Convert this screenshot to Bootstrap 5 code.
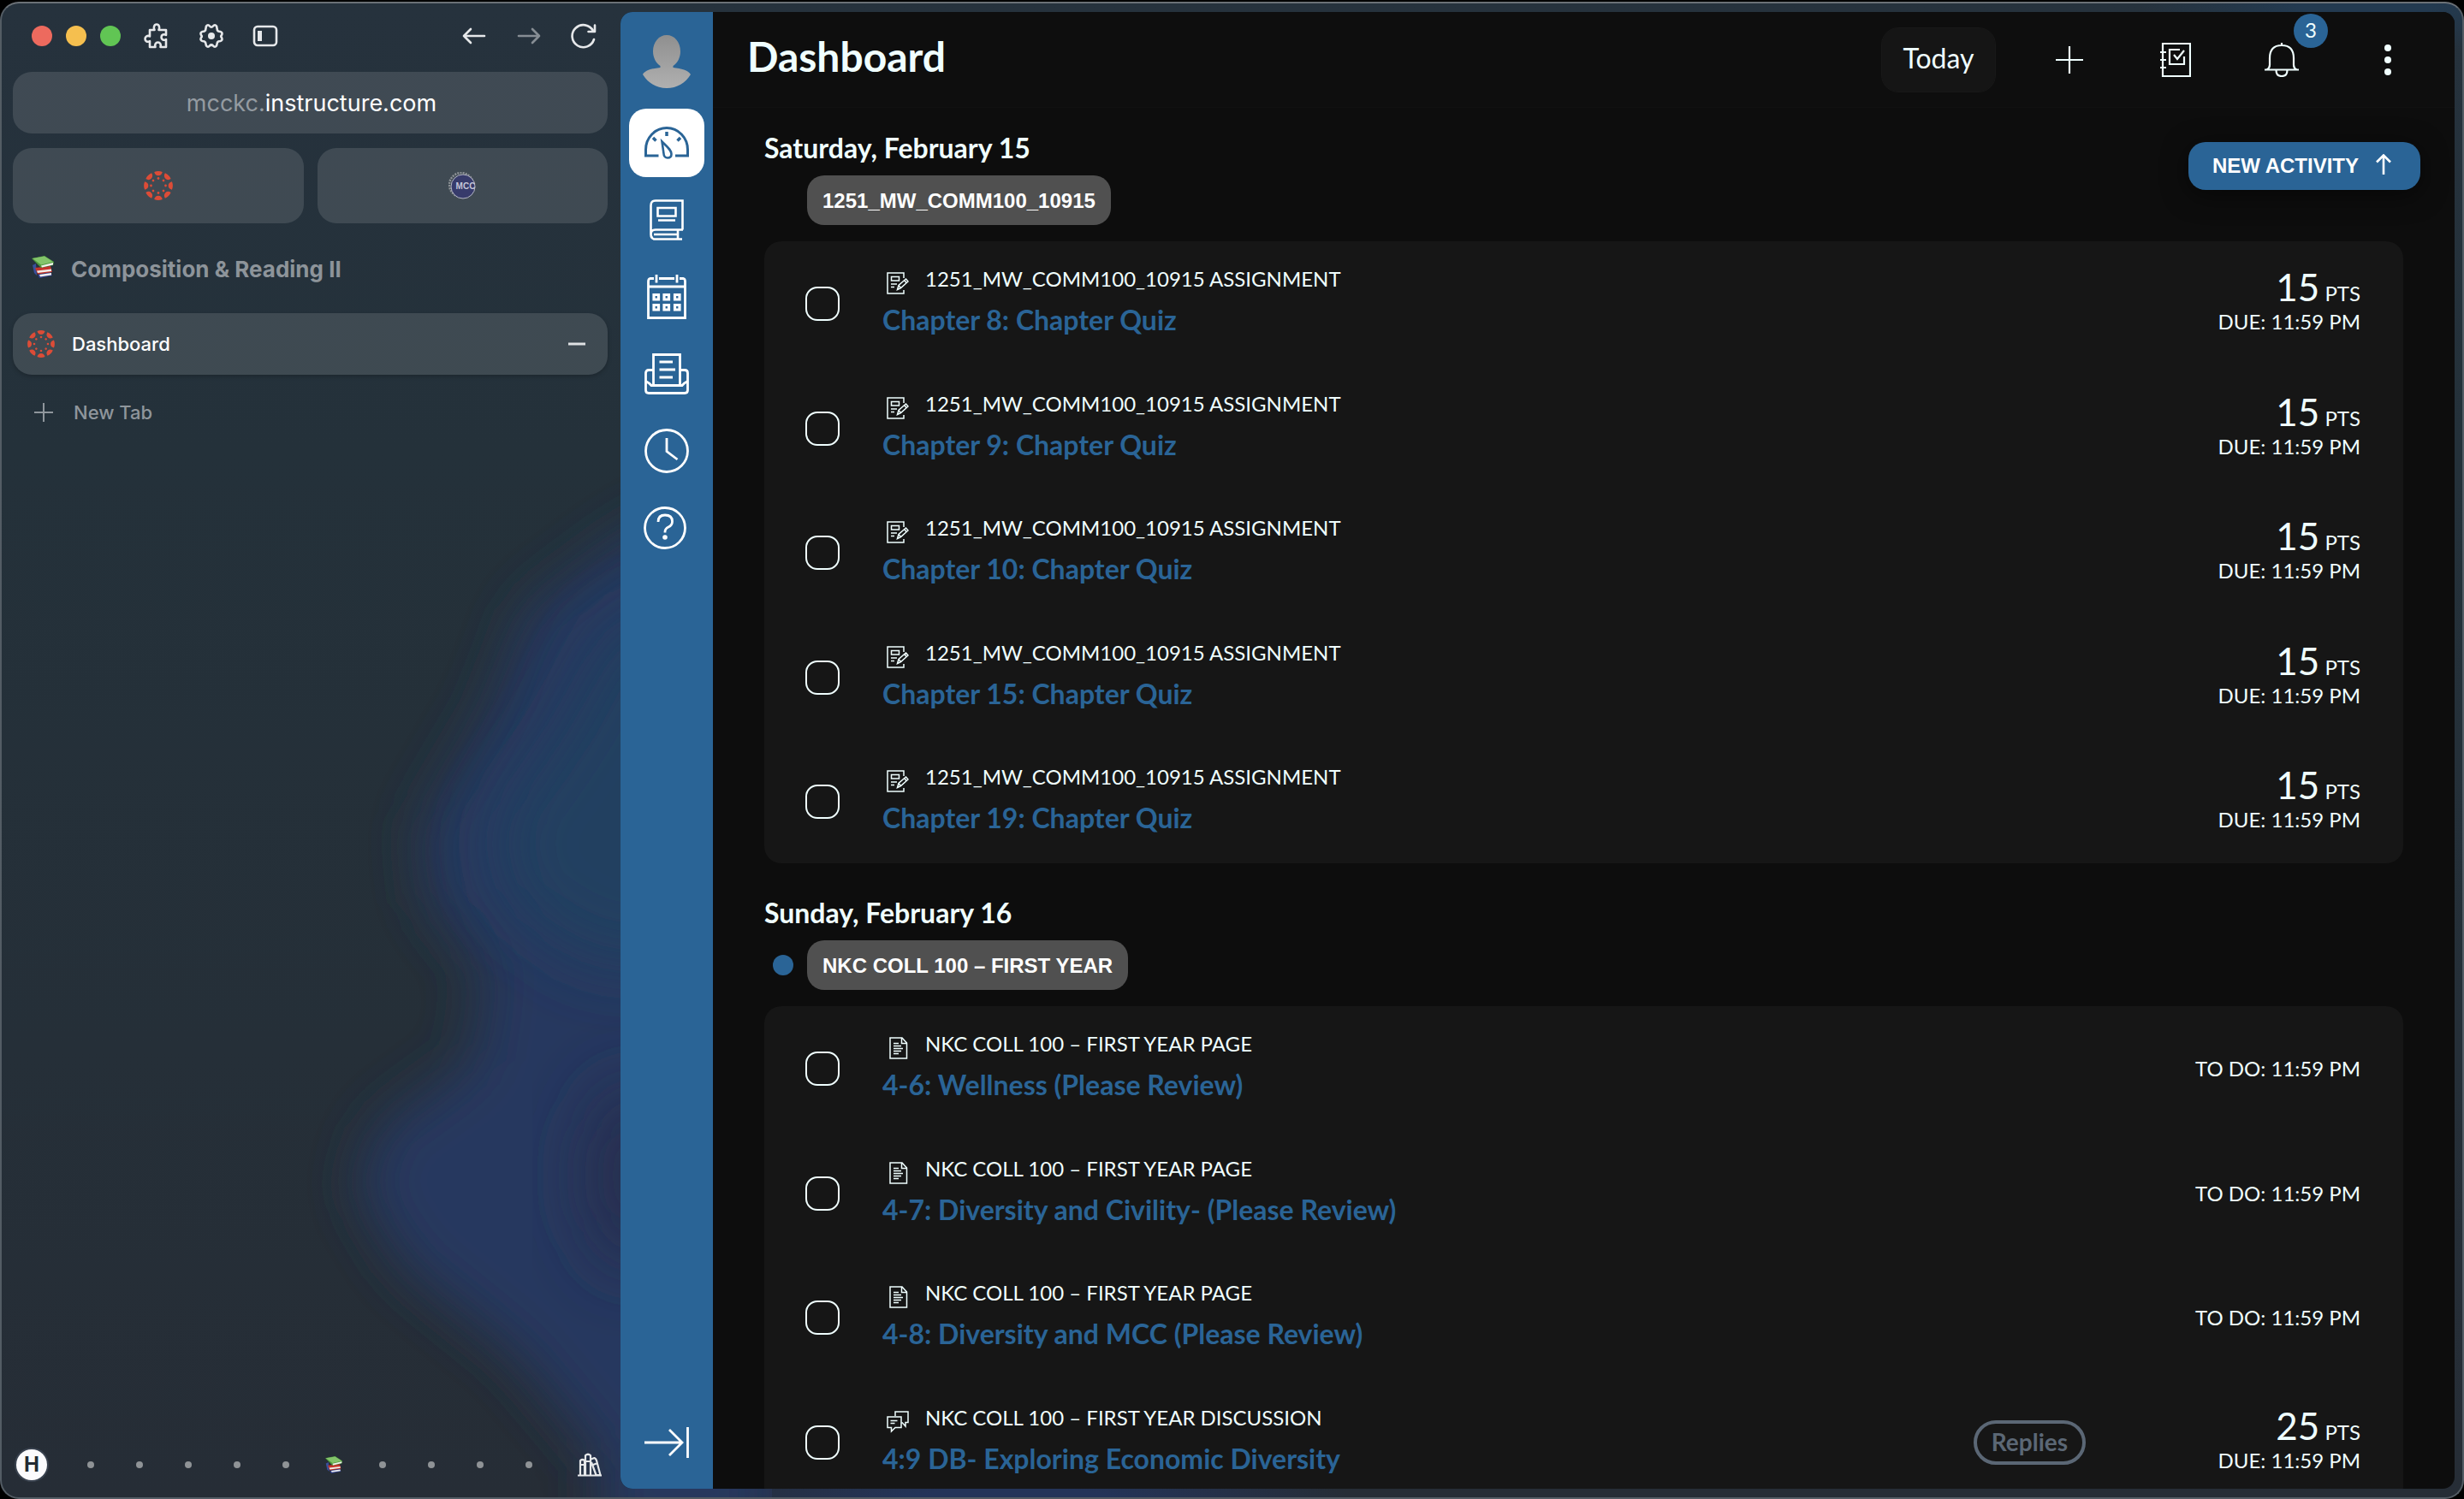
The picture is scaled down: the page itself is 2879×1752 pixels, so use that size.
<!DOCTYPE html>
<html lang="en">
<head>
<meta charset="utf-8">
<meta name="viewport" content="width=device-width, initial-scale=1">
<title>Dashboard</title>
<link href="https://cdn.jsdelivr.net/npm/bootstrap@5.3.0/dist/css/bootstrap.min.css" rel="stylesheet">
<script src="https://cdn.jsdelivr.net/npm/bootstrap@5.3.0/dist/js/bootstrap.bundle.min.js" defer></script>
<style>
  :root { --brand: #2a6496; --ink: #f0ffff; --glass: rgba(255,255,255,.12); --ui: Inter, "Liberation Sans", sans-serif; --lato: Lato, "Liberation Sans", sans-serif; }
  html, body { height: 100%; }
  body { background: #000; overflow: hidden; padding-top: 2px; }
  svg { display: block; flex: none; }
  button { font-family: inherit; }
  .plain-btn { background: none; border: 0; padding: 0; color: inherit; }

  /* browser window */
  .browser {
    border: 2px solid #535c64; border-top-color: #6b7177; border-radius: 22px; padding: 10px 9px 10px 0;
    position: relative; overflow: hidden;
    background-color: #25303a;
    background-image:
      radial-gradient(400px 60px at 1180px 1752px, #243459 30%, transparent 100%),
      radial-gradient(260px 60px at 2760px 0, #233a50 30%, transparent 100%),
      linear-gradient(180deg, #26323d 0%, #24313a 30%, #252f38 70%, #262d36 100%);
  }
  .glow { position: absolute; left: 0; top: 0; }
  .browser-side { flex: 0 0 723px; padding: 0 15px 0 13px; font-family: var(--ui); color: #e6e8ea; position: relative; }
  .window-bar { height: 56px; padding: 0 12px 0 22px; }
  .light { width: 24px; height: 24px; border-radius: 50%; }
  .ext-tools { margin-left: 26px; }
  .address { height: 72px; margin-top: 14px; border: 0; border-radius: 22px; background: var(--glass); font-size: 27px; color: #fff; padding: 3px 0 0 3px; }
  .address span { color: #949ba1; }
  .pins { margin-top: 17px; }
  .pinned { height: 88px; border: 0; border-radius: 22px; background: var(--glass); }
  .space-title { font-size: 26px; font-weight: 700; color: #8d949a; height: 72px; margin-top: 17px; padding-left: 22px; }
  .tab-item { height: 72px; border-radius: 22px; padding-left: 17px; font-size: 22px; color: #fff; }
  .tab-item.current { background: var(--glass); box-shadow: 0 2px 5px rgba(0,0,0,.22); margin-top: 16px; padding-right: 26px; font-weight: 500; }
  .tab-item.fresh { color: #8f969c; margin-top: 8px; padding-left: 25px; font-weight: 500; }
  .space-bar { height: 56px; padding: 0 6px 0 4px; }
  .space-dots { margin: 0 36px 0 31px; }
  .space-slot { width: 40px; display: flex; align-items: center; justify-content: center; }
  .space-slot i { width: 8px; height: 8px; border-radius: 50%; background: #8f9396; }
  .space-h { width: 36px; height: 36px; border-radius: 50%; background: #fbfbfd; color: #222b33; font-weight: 700; font-size: 24px; line-height: 36px; box-shadow: 0 0 0 2px #39424f; }

  /* page */
  .page { border-radius: 14px; overflow: hidden; background: #0d0d0d; font-family: var(--lato); color: var(--ink); min-width: 0; position: relative; }
  .rail { flex: 0 0 108px; background: var(--brand); color: #fff; padding: 23px 0 14px; gap: 10px; }
  .rail a { width: 88px; height: 80px; border-radius: 20px; color: #fff; display: flex; align-items: center; justify-content: center; }
  .rail a.active { background: #fff; color: var(--brand); }
  .rail .avatar-link { height: 70px; border-radius: 0; margin-bottom: 10px; }
  .top-bar { height: 112px; padding: 0 58px 0 40px; border-bottom: 1px solid #111; background: #0e0e0e; }
  .top-bar h1 { font-size: 48px; line-height: 56px; font-weight: 700; margin-bottom: 8px; }
  .today { height: 76px; width: 134px; border-radius: 20px; background: #151515; border: 1px solid #181818; color: var(--ink); font-size: 32px; margin-right: 66px; padding: 0 0 4px; }
  .tool { width: 40px; height: 40px; display: flex; align-items: center; justify-content: center; position: relative; }
  .tools { gap: 84px; }
  .count { position: absolute; left: 34px; top: -34px; width: 40px; height: 40px; border-radius: 50%; background: var(--brand); font-size: 24px; line-height: 38px; color: var(--ink); text-align: center; }
  .planner { padding: 0 60px; position: relative; }
  .new-activity { position: absolute; right: 40px; top: 40px; height: 56px; padding: 0 34px 0 28px; gap: 20px; border: 0; border-radius: 20px; background: var(--brand); color: #fff; font: 700 24px "Liberation Sans", Arial, sans-serif; box-shadow: 0 6px 30px rgba(0,0,0,.5); }
  .day { font-size: 32px; line-height: 40px; font-weight: 700; margin: 0 0 12px; padding-top: 27px; }
  .group + .group .day { padding-top: 38px; }
  .flag-slot { width: 50px; padding-left: 10px; }
  .flag-slot i { display: block; width: 24px; height: 24px; border-radius: 50%; background: var(--brand); }
  .course { height: 58px; padding: 0 18px; border-radius: 20px; background: #505050; color: #fff; font: 700 24px/60px "Liberation Sans", Arial, sans-serif; text-decoration: none; }
  .sheet { background: #161616; border-radius: 20px; margin: 19px 0 0; padding: 0; list-style: none; }
  .sheet li { min-height: 145px; padding: 0 50px 0 48px; display: flex; align-items: center; }
  .sheet li:nth-child(even) { min-height: 146px; border-top: 1px solid #161616; }
  .done { appearance: none; width: 40px; height: 40px; border: 2px solid var(--ink); border-radius: 14px; margin: 0 50px 0 0; flex: none; }
  .done:checked { background: var(--brand); }
  .what { padding-bottom: 5px; }
  .kind { font-size: 24px; line-height: 32px; gap: 19px; padding-left: 5px; margin-bottom: 10px; }
  .kind svg { margin-top: 8px; }
  .what a { font-size: 32px; line-height: 40px; font-weight: 700; color: var(--brand); text-decoration: none; display: block; }
  .when { font-size: 24px; line-height: 32px; text-align: right; }
  .when.scored { padding-bottom: 4px; }
  .pts { line-height: 24px; margin-bottom: 3px; }
  .pts b { font-size: 44px; line-height: 44px; font-weight: 400; }
  .replies { height: 52px; border: 4px solid #5b6775; border-radius: 26px; color: #5b6775; font-size: 28px; line-height: 42px; font-weight: 700; padding: 0 17px; }
  .when-col { width: 321px; }
</style>
</head>
<body>
<svg width="0" height="0" class="position-absolute" aria-hidden="true">
  <defs>
    <symbol id="i-canvas" viewBox="0 0 32 32">
      <g fill="#dc4c37">
        <g id="seg"><path d="M11.500 1Q16 -.8 20.500 1Q19.500 5 16 5Q12.500 5 11.500 1z"/><circle cx="16" cy="8" r="1.300"/></g>
        <use href="#seg" transform="rotate(45 16 16)"/><use href="#seg" transform="rotate(90 16 16)"/><use href="#seg" transform="rotate(135 16 16)"/><use href="#seg" transform="rotate(180 16 16)"/><use href="#seg" transform="rotate(225 16 16)"/><use href="#seg" transform="rotate(270 16 16)"/><use href="#seg" transform="rotate(315 16 16)"/>
      </g>
    </symbol>
    <symbol id="i-books" viewBox="0 0 26 26">
      <path d="M1 11l4-2 1 14-3-3z" fill="#3a4f9c"/>
      <path d="M7 22l15-3 2 4-15 3z" fill="#2f3f8f"/><path d="M9 22l14-2v2.500l-13 2z" fill="#eee"/>
      <path d="M4 14l18-2 2 7-17 2.500z" fill="#c5342b"/><path d="M6 17.500l17-2v2.500l-16 2z" fill="#f1ece6"/>
      <path d="M0 3L15 0l11 7-1 4-14 3z" fill="#4f9a3e"/><path d="M1 3l14-2.500 10 6.500-14 3.500z" fill="#83c46a"/><path d="M11 11.500l14-3.500v2.500l-13 3z" fill="#f3f3ee"/>
    </symbol>
    <symbol id="i-assign" viewBox="0 0 26 26">
      <g fill="none" stroke="currentColor" stroke-width="1.500"><path d="M20 7V1H1v24h19v-4"/><path d="M5.500 5.500h9v4.500h-9zM5 14h7M5 17.500h4"/><path d="M12.500 20.500l1.500-5 8.500-7.500 2.500 3-8.500 7.500zM14 15.500l2.500 3M20.500 9.500l2.500 3"/></g>
    </symbol>
    <symbol id="i-page" viewBox="0 0 26 26">
      <g fill="none" stroke="currentColor" stroke-width="1.500"><path d="M4 1h14l5.500 6v18H4zM17.500 1v6.500h6"/><path d="M8 7.500h6M8 10.500h9M8 13.500h11M8 16.500h9M8 19.500h6"/></g>
    </symbol>
    <symbol id="i-talk" viewBox="0 0 26 26">
      <g fill="none" stroke="currentColor" stroke-width="1.500"><path d="M10 6V1h15v12.500h-3V18l-4-4.500M1 7h16v12.500h-7L5.500 24v-4.500H1z"/><path d="M4.500 11.500h8M4.500 14.500h5"/></g>
    </symbol>
  </defs>
</svg>

<div class="browser d-flex h-100">
  <!-- wallpaper glow showing through the translucent sidebar -->
  <svg class="glow" width="900" height="1748" viewBox="0 0 900 1748" aria-hidden="true">
    <defs>
      <filter id="soft" x="-30%" y="-30%" width="160%" height="160%"><feGaussianBlur stdDeviation="32"/></filter>
      <filter id="softer" x="-50%" y="-50%" width="200%" height="200%"><feGaussianBlur stdDeviation="40"/></filter>
    </defs>
    <path filter="url(#soft)" fill="#25385f" d="M900 540L730 625 615 710 575 820 490 965 500 1050 565 1130 550 1235 440 1315 415 1385 470 1475 600 1580 700 1700 700 1800H900z"/>
    <path filter="url(#softer)" fill="#234160" d="M900 690L720 720 650 850 570 960 590 1050 690 1120H900z"/>
    <ellipse filter="url(#softer)" cx="740" cy="1370" rx="60" ry="110" fill="#262f50"/>
  </svg>
  <aside class="browser-side d-flex flex-column">
    <div class="window-bar d-flex align-items-center">
      <div class="d-flex gap-3"><span class="light" style="background:#ed6a5e"></span><span class="light" style="background:#f5bf4f"></span><span class="light" style="background:#61c554"></span></div>
      <div class="ext-tools d-flex align-items-center gap-4">
        <button class="plain-btn pe-2" aria-label="Extensions"><svg width="32" height="32" viewBox="0 0 32 32" fill="none" stroke="currentColor" stroke-width="2.600" stroke-linejoin="round"><path d="M8 9h5.500c-1.500-2.500-.5-6.500 2.500-6.500s4 4 2.500 6.500H27v6c-2.500-1.500-5.500-.5-5.500 2.500s3 4 5.500 2.500V29h-6.500c1-3-.5-5.500-3-5.500s-4 2.500-3 5.500H8v-7c-2.500 1.500-5.500.5-5.500-2.500S5.500 15 8 16.500z"/></svg></button>
        <button class="plain-btn pe-2" aria-label="Settings"><svg width="32" height="32" viewBox="0 0 32 32" fill="none" stroke="currentColor" stroke-width="2.600" stroke-linejoin="round"><path d="M10 4.500q2-2.500 4 0q2 2.500 4 0q2-2.500 4 0l1 5q1 1.500 3.500 1.500q3 1 1.500 4q-1.500 1.500 0 3q1.500 3-1.500 4q-2.500 0-3.500 1.500l-1 4q-2 2.500-4 0q-2-2-4 0q-2 2.500-4 0l-1-4q-1-1.500-3.500-1.500q-3-1-1.500-4q1.500-1.500 0-3q-1.500-3 1.500-4q2.500 0 3.500-1.500z"/><circle cx="16" cy="16" r="4" fill="currentColor" stroke="none"/></svg></button>
        <button class="plain-btn" aria-label="Toggle sidebar"><svg width="30" height="30" viewBox="0 0 30 30" fill="none" stroke="currentColor" stroke-width="2.600"><rect x="2" y="4" width="26" height="22" rx="4"/><path d="M8.500 9v12" stroke-width="5"/></svg></button>
      </div>
      <div class="d-flex ms-auto align-items-center gap-4">
        <button class="plain-btn pe-2" aria-label="Back"><svg width="32" height="32" viewBox="0 0 32 32" fill="none" stroke="currentColor" stroke-width="2.600" stroke-linecap="round" stroke-linejoin="round"><path d="M28 16H4M12 8l-8 8 8 8"/></svg></button>
        <button class="plain-btn pe-2 opacity-50" aria-label="Forward"><svg width="32" height="32" viewBox="0 0 32 32" fill="none" stroke="currentColor" stroke-width="2.600" stroke-linecap="round" stroke-linejoin="round"><path d="M4 16h24M20 8l8 8-8 8"/></svg></button>
        <button class="plain-btn" aria-label="Reload"><svg width="32" height="32" viewBox="0 0 32 32" fill="none" stroke="currentColor" stroke-width="2.600" stroke-linecap="round" stroke-linejoin="round"><path d="M28 20a13 13 0 1 1-1-10M29 3.500V11h-7.500"/></svg></button>
      </div>
    </div>
    <button class="address w-100"><span>mcckc.</span>instructure.com</button>
    <div class="pins row g-0">
      <div class="col pe-2"><button class="pinned w-100 d-flex align-items-center justify-content-center" aria-label="Canvas"><svg width="34" height="34"><use href="#i-canvas"/></svg></button></div>
      <div class="col ps-2"><button class="pinned w-100 d-flex align-items-center justify-content-center" aria-label="MCC">
        <svg width="32" height="32" viewBox="0 0 32 32"><circle cx="15" cy="15" r="14" fill="none" stroke="#8d9296" stroke-width="2.500" stroke-dasharray="2 1.200"/><circle cx="17" cy="17" r="14" fill="#373b6b" stroke="#b4b6c4" stroke-width="1"/><text x="20" y="20" text-anchor="middle" font-family="Liberation Sans, sans-serif" font-weight="700" font-size="10" fill="#c4c5d8">MCC</text></svg></button></div>
    </div>
    <div class="space-title d-flex align-items-center"><svg class="me-3 mb-1" width="26" height="26"><use href="#i-books"/></svg><span class="ps-1">Composition &amp; Reading II</span></div>
    <div class="tab-item current d-flex align-items-center"><svg class="me-3" width="32" height="32"><use href="#i-canvas"/></svg><span class="ps-1">Dashboard</span>
      <button class="plain-btn ms-auto" aria-label="Close tab"><svg width="20" height="20" viewBox="0 0 20 20"><path d="M0 10h20" stroke="#dfe1e3" stroke-width="3"/></svg></button></div>
    <button class="plain-btn tab-item fresh d-flex align-items-center"><svg class="me-4" width="22" height="24" viewBox="0 0 22 24"><path d="M0 12h22M11 1v22" stroke="currentColor" stroke-width="2"/></svg><span>New Tab</span></button>
    <div class="space-bar d-flex align-items-center mt-auto">
      <button class="plain-btn space-h text-center" aria-label="Home space">H</button>
      <div class="space-dots d-flex align-items-center justify-content-between flex-fill">
        <span class="space-slot"><i></i></span><span class="space-slot"><i></i></span><span class="space-slot"><i></i></span><span class="space-slot"><i></i></span><span class="space-slot"><i></i></span>
        <span class="space-slot"><svg width="20" height="20"><use href="#i-books"/></svg></span>
        <span class="space-slot"><i></i></span><span class="space-slot"><i></i></span><span class="space-slot"><i></i></span><span class="space-slot"><i></i></span>
      </div>
      <button class="plain-btn" aria-label="Library"><svg width="30" height="28" viewBox="0 0 30 28" fill="none" stroke="currentColor" stroke-width="2.200" stroke-linejoin="round"><path d="M1 26.500h28M4 26V9q2.500-2 5 0v17M10 26V3q3-2.500 6 0v23M4 14h5M10 10h6M16.500 7.500l4-1.500q2 1 2.500 3l4.500 17h-5L17 11M19 14l4-1.500"/></svg></button>
    </div>
  </aside>

  <div class="page d-flex flex-fill">
    <nav class="rail d-flex flex-column align-items-center" aria-label="Global navigation">
      <a href="#" class="avatar-link" aria-label="Account"><svg width="56" height="66" viewBox="0 0 56 66"><defs><linearGradient id="g" x1="0" y1="0" x2="0" y2="1"><stop offset="0" stop-color="#8f8f8f"/><stop offset="1" stop-color="#b0b0b0"/></linearGradient></defs><path fill="url(#g)" d="M28 2c9 0 16 8 16 19 0 8-4 14-8.500 17v2C45 41 53 43 56 48 50 58 40 64 28 64S6 58 0 48c3-5 11-7 20.500-8v-2C16 35 12 29 12 21 12 10 19 2 28 2z"/></svg></a>
      <a href="#" class="active" aria-label="Dashboard"><svg width="52" height="38" viewBox="0 0 52 38" fill="none" stroke="currentColor" stroke-width="3"><path d="M16.500 34H1.500V27a24.500 25.500 0 0 1 49 0v7H36"/><path d="M26 6v5M10 13l3.500 3.500M42 13l-3.500 3.500" stroke-width="3.500"/><path d="M20.500 17.500c6 6 11 10 11 14.500 0 3-2 4.500-4.500 4.500s-4.500-2-4.500-5z" stroke-width="2.600"/></svg></a>
      <a href="#" aria-label="Courses"><svg width="40" height="48" viewBox="0 0 40 48" fill="none" stroke="currentColor" stroke-width="2.600"><path d="M38.500 35.500V1.500H7Q1.500 1.500 1.500 7v34M39 35.500H7Q1.500 35.500 1.500 41t5.500 5.500h31M33 36v10M33 41H5"/><path d="M9.500 10h21v9.500h-21zM10 24.500h20"/></svg></a>
      <a href="#" aria-label="Calendar"><svg width="46" height="52" viewBox="0 0 46 52" fill="none" stroke="currentColor" stroke-width="2.800"><path d="M8 4.500H3.500Q1.500 5 1.500 8v42.500h43V8q0-3-2-3.500H38M14 4.500h18M11 0v9.500M35 0v9.500M1.500 14h43"/><path d="M8 23.500h5.500V29H8zM20 23.500h5.500V29H20zM32.500 23.500H38V29h-5.500zM8 35.500h5.500V41H8zM20 35.500h5.500V41H20zM32.500 35.500H38V41h-5.500z" stroke-width="3.200"/></svg></a>
      <a href="#" aria-label="Inbox"><svg width="52" height="48" viewBox="0 0 52 48" fill="none" stroke="currentColor" stroke-width="2.800"><path d="M10.500 36V1.500h31V36M10 19.500H5Q1.500 19.500 1.500 23v20q0 3.500 3.500 3.500h42q3.500 0 3.500-3.500V23q0-3.500-3.500-3.500h-5M1.500 32.500q4 2 6.500 5h36q2.500-3 6.500-5"/><path d="M17.500 10H33M17.500 19H36M17.500 28H33"/></svg></a>
      <a href="#" aria-label="History"><svg width="52" height="52" viewBox="0 0 52 52" fill="none" stroke="currentColor" stroke-width="2.800"><circle cx="26" cy="26" r="24.500"/><path d="M26 11v15.500l12.500 9.500"/></svg></a>
      <a href="#" class="pe-1" aria-label="Help"><svg width="50" height="50" viewBox="0 0 50 50" fill="none" stroke="currentColor" stroke-width="2.800"><circle cx="25" cy="25" r="23.500"/><path d="M17 18q0-8 8-8 8.500 0 8.500 7.500 0 4.500-4.500 6.500-4 2-4 5.500v1"/><circle cx="25" cy="36" r="2.800" fill="currentColor" stroke="none"/></svg></a>
      <a href="#" class="mt-auto" aria-label="Expand navigation"><svg width="52" height="38" viewBox="0 0 52 38" fill="none" stroke="currentColor" stroke-width="2.800"><path d="M0 19h44M29 4l15 15-15 15M50.500 1v36"/></svg></a>
    </nav>

    <main class="flex-fill">
      <header class="top-bar d-flex align-items-center">
        <h1 class="me-auto">Dashboard</h1>
        <button class="today">Today</button>
        <div class="tools d-flex">
          <button class="plain-btn tool" aria-label="Add to do"><svg width="32" height="32" viewBox="0 0 32 32"><path d="M0 16h32M16 0v32" stroke="currentColor" stroke-width="2.200"/></svg></button>
          <button class="plain-btn tool" aria-label="My grades"><svg width="36" height="40" viewBox="0 0 36 40" fill="none" stroke="currentColor" stroke-width="2.200"><path d="M3 1h32v38H3z"/><path d="M0 11h7M0 20h7M0 29h7M28 16v9H11V8h12M16 14l4 5 8-10"/></svg></button>
          <button class="plain-btn tool" aria-label="3 notifications"><svg width="40" height="40" viewBox="0 0 40 40" fill="none" stroke="currentColor" stroke-width="2.200"><path d="M20 0v3M20 3q14 0 14 15v8q0 3.500 3.500 5.500h-35Q6 29.500 6 26v-8Q6 3 20 3zM0 31.500h40M13.500 32q0 7 6.500 7t6.500-7"/></svg><span class="count">3</span></button>
          <button class="plain-btn tool" aria-label="More"><svg width="10" height="38" viewBox="0 0 10 38" fill="currentColor"><circle cx="5" cy="5" r="4"/><circle cx="5" cy="19" r="4"/><circle cx="5" cy="33" r="4"/></svg></button>
        </div>
      </header>

      <div class="planner">
        <button class="new-activity d-flex align-items-center">NEW ACTIVITY<svg class="mb-1" width="18" height="24" viewBox="0 0 18 24" fill="none" stroke="currentColor" stroke-width="2.600"><path d="M9 24V2M1 9.500l8-8 8 8"/></svg></button>

        <section class="group">
          <h2 class="day">Saturday, February 15</h2>
          <div class="d-flex align-items-center"><span class="flag-slot"></span><a href="#" class="course">1251_MW_COMM100_10915</a></div>
          <ul class="sheet">
            <li><input type="checkbox" class="done" aria-labelledby="a1"><div class="what me-auto"><div class="kind d-flex"><svg width="26" height="26"><use href="#i-assign"/></svg>1251_MW_COMM100_10915 ASSIGNMENT</div><a href="#" id="a1">Chapter 8: Chapter Quiz</a></div><div class="when scored"><div class="pts"><b>15</b> PTS</div>DUE: 11:59 PM</div></li>
            <li><input type="checkbox" class="done" aria-labelledby="a2"><div class="what me-auto"><div class="kind d-flex"><svg width="26" height="26"><use href="#i-assign"/></svg>1251_MW_COMM100_10915 ASSIGNMENT</div><a href="#" id="a2">Chapter 9: Chapter Quiz</a></div><div class="when scored"><div class="pts"><b>15</b> PTS</div>DUE: 11:59 PM</div></li>
            <li><input type="checkbox" class="done" aria-labelledby="a3"><div class="what me-auto"><div class="kind d-flex"><svg width="26" height="26"><use href="#i-assign"/></svg>1251_MW_COMM100_10915 ASSIGNMENT</div><a href="#" id="a3">Chapter 10: Chapter Quiz</a></div><div class="when scored"><div class="pts"><b>15</b> PTS</div>DUE: 11:59 PM</div></li>
            <li><input type="checkbox" class="done" aria-labelledby="a4"><div class="what me-auto"><div class="kind d-flex"><svg width="26" height="26"><use href="#i-assign"/></svg>1251_MW_COMM100_10915 ASSIGNMENT</div><a href="#" id="a4">Chapter 15: Chapter Quiz</a></div><div class="when scored"><div class="pts"><b>15</b> PTS</div>DUE: 11:59 PM</div></li>
            <li><input type="checkbox" class="done" aria-labelledby="a5"><div class="what me-auto"><div class="kind d-flex"><svg width="26" height="26"><use href="#i-assign"/></svg>1251_MW_COMM100_10915 ASSIGNMENT</div><a href="#" id="a5">Chapter 19: Chapter Quiz</a></div><div class="when scored"><div class="pts"><b>15</b> PTS</div>DUE: 11:59 PM</div></li>
          </ul>
        </section>

        <section class="group">
          <h2 class="day">Sunday, February 16</h2>
          <div class="d-flex align-items-center"><span class="flag-slot"><i></i></span><a href="#" class="course">NKC COLL 100 – FIRST YEAR</a></div>
          <ul class="sheet">
            <li><input type="checkbox" class="done" aria-labelledby="b1"><div class="what me-auto"><div class="kind d-flex"><svg width="26" height="26"><use href="#i-page"/></svg>NKC COLL 100 – FIRST YEAR PAGE</div><a href="#" id="b1">4-6: Wellness (Please Review)</a></div><div class="when">TO DO: 11:59 PM</div></li>
            <li><input type="checkbox" class="done" aria-labelledby="b2"><div class="what me-auto"><div class="kind d-flex"><svg width="26" height="26"><use href="#i-page"/></svg>NKC COLL 100 – FIRST YEAR PAGE</div><a href="#" id="b2">4-7: Diversity and Civility- (Please Review)</a></div><div class="when">TO DO: 11:59 PM</div></li>
            <li><input type="checkbox" class="done" aria-labelledby="b3"><div class="what me-auto"><div class="kind d-flex"><svg width="26" height="26"><use href="#i-page"/></svg>NKC COLL 100 – FIRST YEAR PAGE</div><a href="#" id="b3">4-8: Diversity and MCC (Please Review)</a></div><div class="when">TO DO: 11:59 PM</div></li>
            <li><input type="checkbox" class="done" aria-labelledby="b4"><div class="what me-auto"><div class="kind d-flex"><svg width="26" height="26"><use href="#i-talk"/></svg>NKC COLL 100 – FIRST YEAR DISCUSSION</div><a href="#" id="b4">4:9 DB- Exploring Economic Diversity</a></div><span class="replies">Replies</span><div class="when scored when-col"><div class="pts"><b>25</b> PTS</div>DUE: 11:59 PM</div></li>
          </ul>
        </section>
      </div>
    </main>
  </div>
</div>
</body>
</html>
